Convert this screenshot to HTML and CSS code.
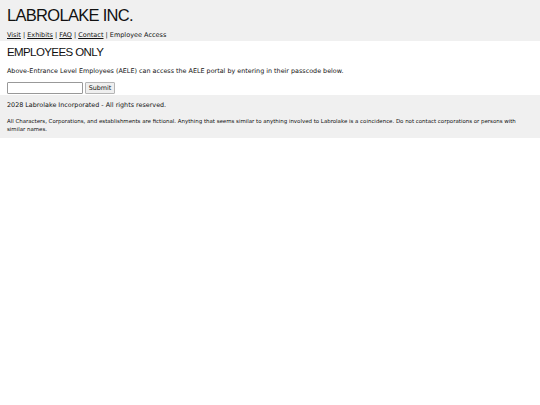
FILE: index.html
```html
<!DOCTYPE html>
<html>
<head>
<meta charset="utf-8">
<link rel="stylesheet" href="styles.css">
</head>
<body>
<header class="header">
  <h1 class="title">LABROLAKE INC.</h1>
  <nav class="nav"><a href="#">Visit</a> | <a href="#">Exhibits</a> | <a href="#">FAQ</a> | <a href="#">Contact</a> | Employee Access</nav>
</header>
<main class="main">
  <h2 class="heading">EMPLOYEES ONLY</h2>
  <p class="text">Above-Entrance Level Employees (AELE) can access the AELE portal by entering in their passcode below.</p>
  <form class="form"><input class="field" type="password"><button class="btn" type="button">Submit</button></form>
</main>
<footer class="footer">
  <p class="copy">2028 Labrolake Incorporated - All rights reserved.</p>
  <p class="fine">All Characters, Corporations, and establishments are fictional. Anything that seems similar to anything involved to Labrolake is a coincidence. Do not contact corporations or persons with similar names.</p>
</footer>
</body>
</html>
```
FILE: styles.css
```css
body { margin: 0; font-family: "DejaVu Sans", Verdana, sans-serif; color: #111; background: #fff; }
.header { background: #f0f0f0; padding: 5px 7px 1px; }
.title { margin: 0; font-family: "Liberation Sans", Arial, sans-serif; font-weight: normal; font-size: 16.5px; letter-spacing: -0.7px; line-height: 20px; }
.nav { font-size: 6.5px; margin-top: 5px; line-height: 10px; }
.nav a { color: #111; }
.main { padding: 4px 7px 1px; }
.heading { margin: 0; font-family: "Liberation Sans", Arial, sans-serif; font-weight: normal; font-size: 11.5px; letter-spacing: -0.6px; line-height: 14px; }
.text { font-size: 6.4px; margin: 7px 0 6px; line-height: 10px; }
.form { display: flex; gap: 2px; margin: 0; }
.field { box-sizing: border-box; width: 76px; height: 12px; padding: 1px; border: 1px solid #999; border-radius: 1px; margin: 0; background: #fff; }
.btn { box-sizing: border-box; width: 30px; height: 12px; font-family: "DejaVu Sans", sans-serif; font-size: 6.4px; color: #111; padding: 0; margin: 0; border: 1px solid #b5b5b5; border-radius: 1px; background: #efefef; }
.footer { background: #f0f0f0; padding: 5px 7px 5px; }
.copy { font-size: 6.4px; margin: 0 0 7px; line-height: 10px; }
.fine { font-size: 5.45px; margin: 0; line-height: 8px; }
```
